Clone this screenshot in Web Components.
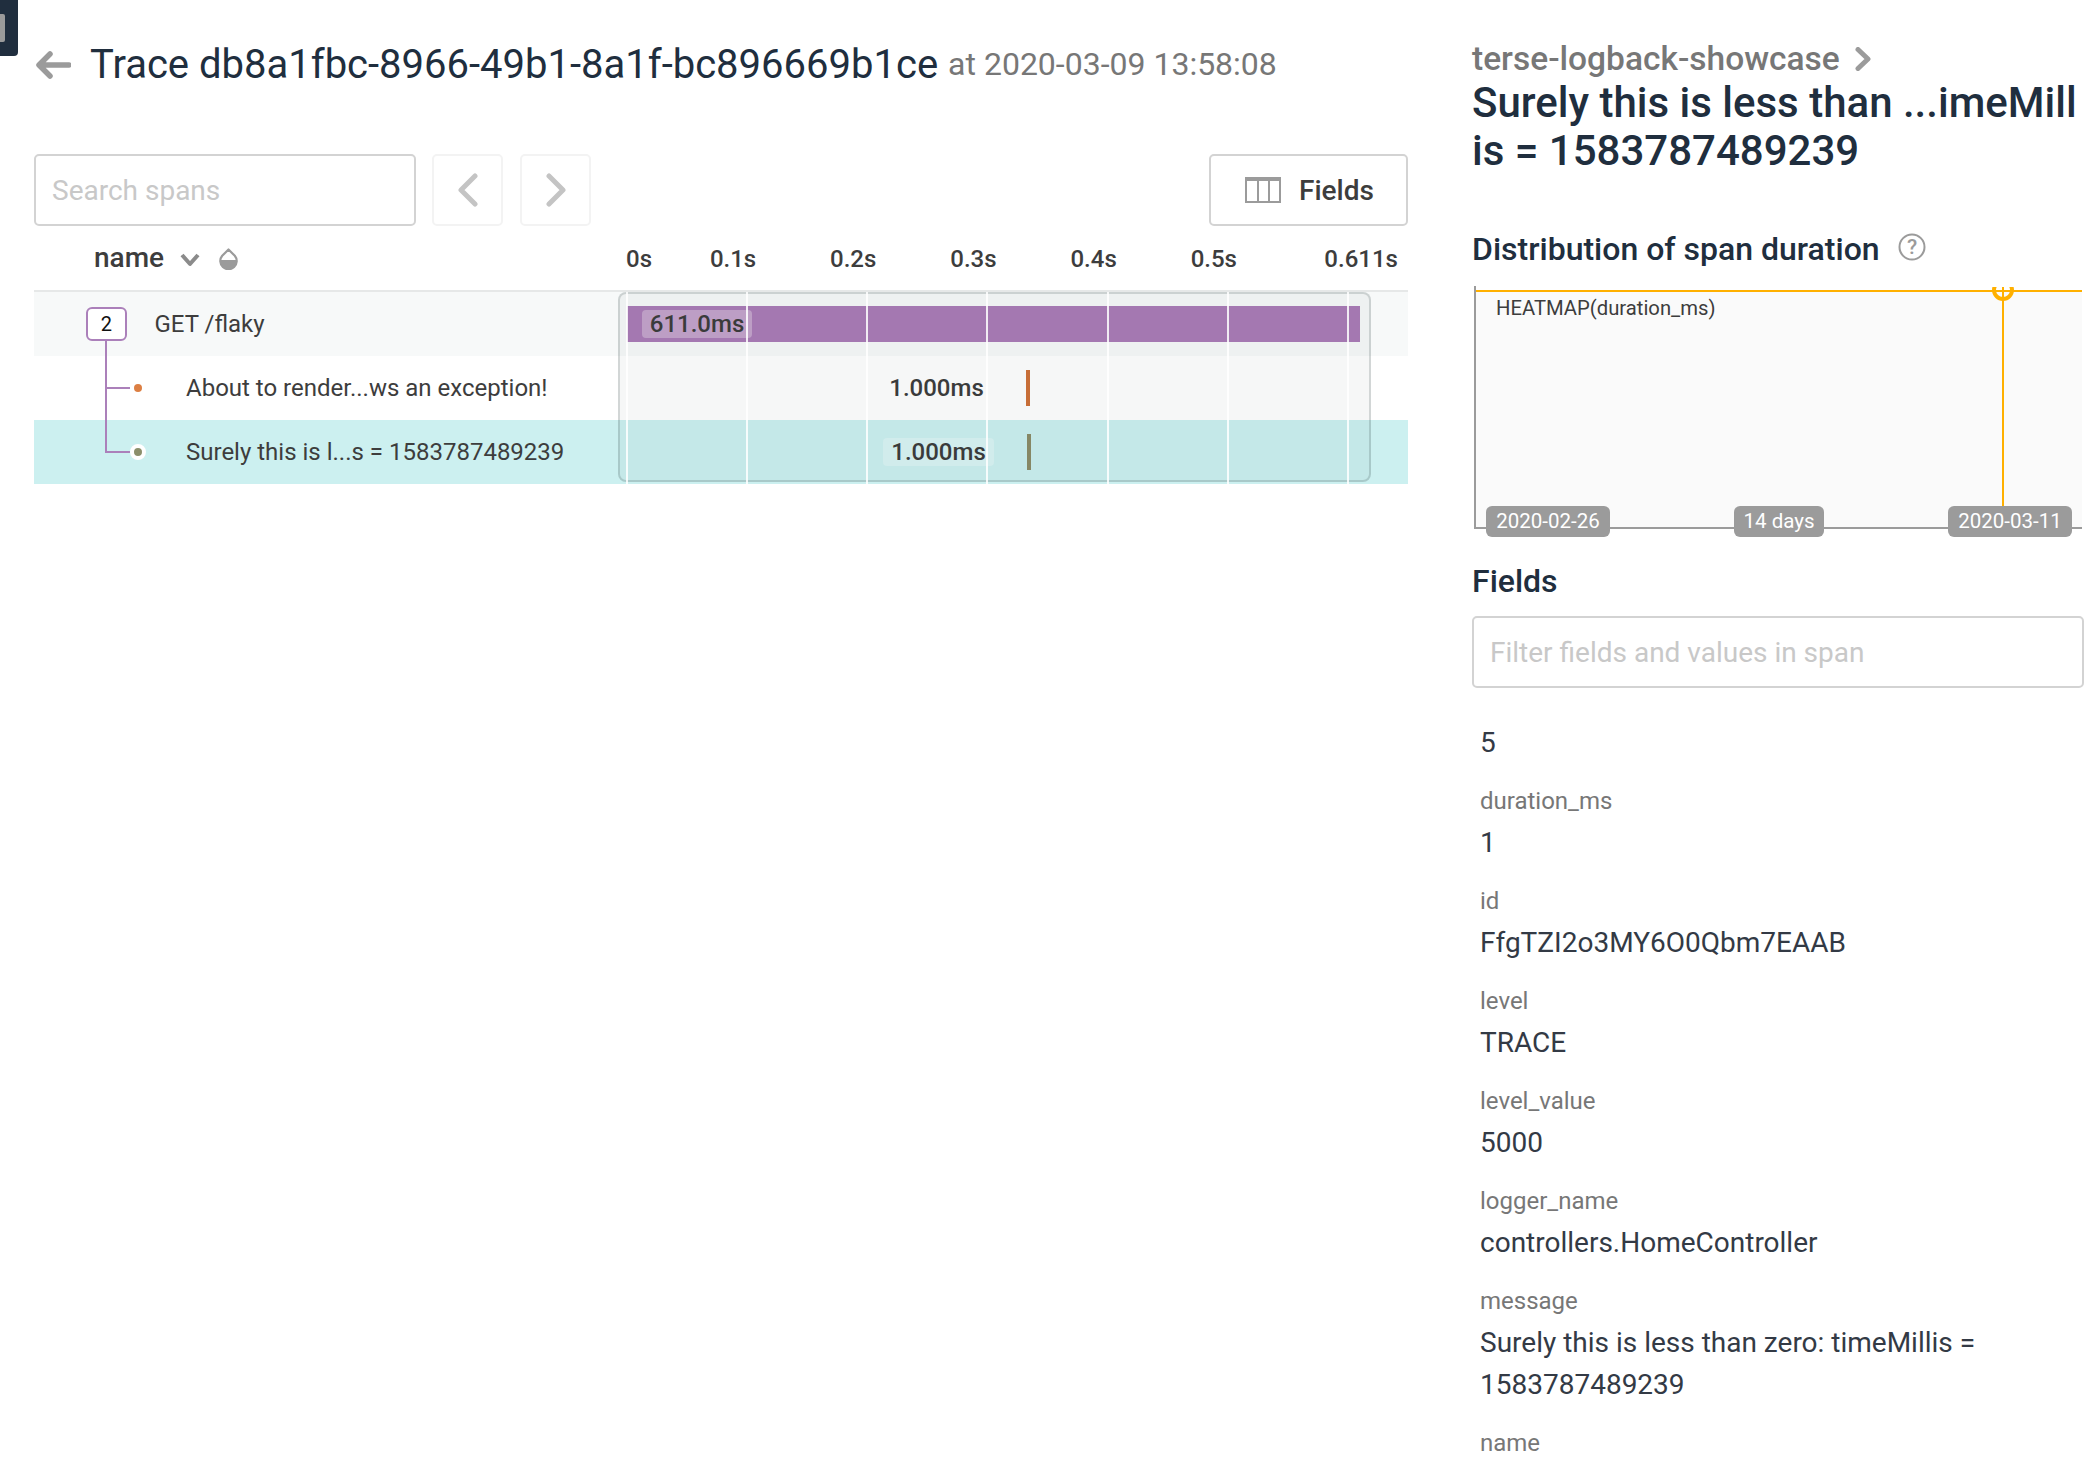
<!DOCTYPE html>
<html lang="en"><head><meta charset="utf-8"><title>Trace</title>
<style>
html,body{margin:0;padding:0;height:1466px;overflow:hidden;background:#fff;font-family:Roboto,"Liberation Sans",sans-serif;color:#3d3d3d}
</style></head><body>
<trace-app>
  <trace-header slot="header" trace="Trace db8a1fbc-8966-49b1-8a1f-bc896669b1ce" at="at 2020-03-09 13:58:08"></trace-header>
  <trace-toolbar slot="toolbar"></trace-toolbar>
  <trace-table slot="table">
    <trace-row kind="root" name="GET /flaky" count="2" dur="611.0ms"></trace-row>
    <trace-row kind="child" name="About to render...ws an exception!" dur="1.000ms" color="#dc7f43" bar="#cf7238" mark="407" tag="262"></trace-row>
    <trace-row kind="last" selected name="Surely this is l...s = 1583787489239" dur="1.000ms" color="#8b8f6b" bar="#8b8b68" mark="408" tag="264"></trace-row>
  </trace-table>
  <span-panel slot="side">
    <field-item value="5"></field-item>
    <field-item label="duration_ms" value="1"></field-item>
    <field-item label="id" value="FfgTZI2o3MY6O0Qbm7EAAB"></field-item>
    <field-item label="level" value="TRACE"></field-item>
    <field-item label="level_value" value="5000"></field-item>
    <field-item label="logger_name" value="controllers.HomeController"></field-item>
    <field-item label="message" value="Surely this is less than zero: timeMillis = 1583787489239"></field-item>
    <field-item label="name"></field-item>
  </span-panel>
</trace-app>
<script>
function def(name, html){
  customElements.define(name, class extends HTMLElement{
    connectedCallback(){
      if(this.shadowRoot) return;
      const a=n=>this.getAttribute(n)||'';
      this.attachShadow({mode:'open'}).innerHTML = html(a,this);
    }
  });
}
def('trace-app',()=>`<style>
:host{display:block;position:relative;width:2100px;height:1466px;overflow:hidden}
.tab{position:absolute;left:0;top:0;width:18px;height:56px;background:#202e3e;border-radius:0 0 4px 0}
.tab i{position:absolute;left:0;top:14px;width:5px;height:28px;background:#9b9b9b;border-radius:0 2px 2px 0}
.wrap{display:grid;grid-template-columns:1374px 612px;column-gap:64px;padding-left:34px}
</style><div class="tab"><i></i></div>
<div class="wrap"><div><slot name="header"></slot><slot name="toolbar"></slot><slot name="table"></slot></div><div><slot name="side"></slot></div></div>`);

def('trace-header',a=>`<style>
:host{display:flex;align-items:center;height:48px;padding-top:41px;padding-bottom:65px;white-space:nowrap}
svg{width:36px;height:28px;margin:0 19px 0 1px;flex:none}
h1{margin:0;font:400 40px/48px Roboto,sans-serif;color:#202e3e}
span{font:400 32px/48px Roboto,sans-serif;color:#777;margin-left:10px;position:relative;top:-1px}
</style><svg viewBox="0 0 36 28"><path d="M15 3 4 14l11 11M5 14h29" fill="none" stroke="#9b9b9b" stroke-width="5.500" stroke-linecap="round" stroke-linejoin="round"/></svg>
<h1>${a('trace')}</h1><span>${a('at')}</span>`);

def('trace-toolbar',()=>`<style>
:host{display:flex;height:72px;gap:16px}
.box{box-sizing:border-box;height:72px;border:2px solid #d3d3d3;border-radius:5px;background:#fff;display:flex;align-items:center}
.search{width:382px;padding-left:16px;font:400 28px Roboto,sans-serif;color:#c8c8c8}
.nav{width:71px;justify-content:center;border-color:#f3f3f3}
.nav.next{margin-left:1px}
.fields{margin-left:auto;width:199px;font:500 28px Roboto,sans-serif;color:#3d3d3d;padding-left:34px;gap:18px}
svg{display:block}
</style><div class="box search">Search spans</div>
<div class="box nav"><svg width="22" height="34" viewBox="0 0 22 34"><path d="M18 3 4 17l14 14" fill="none" stroke="#c4c4c4" stroke-width="5" stroke-linecap="round" stroke-linejoin="round"/></svg></div>
<div class="box nav next"><svg width="22" height="34" viewBox="0 0 22 34"><path d="M4 3l14 14L4 31" fill="none" stroke="#c4c4c4" stroke-width="5" stroke-linecap="round" stroke-linejoin="round"/></svg></div>
<div class="box fields"><svg width="36" height="26" viewBox="0 0 36 26"><path d="M0 0h36v26H0z" fill="#9b9b9b"/><path d="M2 4h10v20H2zM14 4h9v20h-9zM25 4h9v20h-9z" fill="#fff"/></svg>Fields</div>`);

def('trace-table',()=>`<style>
:host{display:block;position:relative;width:1374px}
.head{display:grid;grid-template-columns:592px auto;height:66px;box-sizing:border-box;border-bottom:2px solid #e6e8e8;align-items:center;font:500 24px Roboto,sans-serif;color:#3d3d3d}
.name{display:flex;align-items:center;padding-left:60px;font-size:28px;position:relative;top:-1px}
.name svg{display:block}
.ticks{display:grid;grid-template-columns:10px repeat(5,120.2px) 161px;text-align:right;white-space:nowrap;position:relative;top:1px}
.ticks span:first-child{text-align:left}
.over{position:absolute;left:584px;top:66px;width:753px;height:190px;box-sizing:border-box;border:2px solid rgba(0,30,30,.15);border-radius:8px;background:rgba(0,40,40,.035);pointer-events:none}
.line{position:absolute;top:66px;height:192px;width:2px;background:rgba(255,255,255,.85);pointer-events:none}
</style>
<div class="head"><div class="name">name<svg style="margin:5px 0 0 16px" width="20" height="14" viewBox="0 0 20 14"><path d="M2 2l8 9 8-9" fill="none" stroke="#8b8b8b" stroke-width="4" stroke-linejoin="round"/></svg><svg style="margin:4px 0 0 19px" width="19" height="22" viewBox="0 0 19 22"><path d="M9.500 1.500 3.200 7.800a8.200 8.200 0 1 0 12.600 0z" fill="#fff" stroke="#9b9b9b" stroke-width="2.200" stroke-linejoin="round"/><path d="M1 12h17v1a8.500 8.500 0 0 1-17 0z" fill="#9b9b9b"/></svg></div>
<div class="ticks"><span>0s</span><span>0.1s</span><span>0.2s</span><span>0.3s</span><span>0.4s</span><span>0.5s</span><span>0.611s</span></div></div>
<slot></slot>
<div class="over"></div>
${[592,712,832,952,1072.7,1193,1313].map(x=>`<div class="line" style="left:${x}px"></div>`).join('')}`);

def('trace-row',(a,el)=>{
  const kind=a('kind'), sel=el.hasAttribute('selected');
  const tree = kind==='root'
   ? `<span class="badge">${a('count')}</span>`
   : `<i class="stem"></i><i class="branch"></i><i class="dot ${sel?'sel':''}" style="--c:${a('color')}"></i>`;
  const tl = kind==='root'
   ? `<div class="bar"><span class="tag root">${a('dur')}</span></div>`
   : `<span class="tag" style="left:${a('tag')}px">${a('dur')}</span><i class="mark" style="left:${a('mark')}px;background:${a('bar')}"></i>`;
  return `<style>
:host{display:grid;grid-template-columns:585px 789px;height:64px;background:${kind==='root'?'#f7f9f9':sel?'#ccf0f0':'#fff'}}
.label{position:relative;height:64px;font:400 24px/65px Roboto,sans-serif;color:#3d3d3d;white-space:nowrap;padding-left:${kind==='root'?'120.5px':'152px'}}
.badge{position:absolute;left:51.8px;top:15px;box-sizing:border-box;width:41px;height:34px;border:2px solid #ab80ba;border-radius:6px;background:#fff;color:#111;font:400 20px/30px Roboto,sans-serif;text-align:center}
.stem{position:absolute;left:71px;top:${kind==='child'?'-15px':'-64px'};width:2px;height:${kind==='child'?'47px':'97px'};background:#ab80ba}
.branch{position:absolute;left:71px;top:31px;width:25px;height:2px;background:#ab80ba}
.dot{position:absolute;left:100px;top:28px;width:8px;height:8px;border-radius:50%;background:var(--c)}
.dot.sel{left:96px;top:24px;width:8px;height:8px;border:4px solid #fff;box-sizing:content-box}
.time{position:relative}
.bar{position:absolute;left:8px;top:14px;width:733px;height:36px;background:#ab7cb7}
.tag{position:absolute;top:18px;box-sizing:border-box;width:111px;height:28px;border-radius:4px;background:rgba(255,255,255,.25);font:500 24px/28px Roboto,sans-serif;color:#3d3d3d;text-align:center;white-space:nowrap}
.tag.root{left:15px;top:4px;width:110px;background:rgba(255,255,255,.3)}
.mark{position:absolute;top:14px;width:4px;height:36px}
</style><div class="label">${tree}${a('name')}</div><div class="time">${tl}</div>`;
});

def('span-panel',()=>`<style>
:host{display:block;width:612px}
.crumb{display:flex;align-items:center;gap:14px;height:41px;margin-top:38px;font:500 33.500px/41px Roboto,sans-serif;color:#777;white-space:nowrap}
h1{margin:0;font:500 42px/48px Roboto,sans-serif;color:#202e3e;word-break:break-all}
h2{margin:0;font:500 32px/40px Roboto,sans-serif;color:#202e3e}
.dist{display:flex;align-items:center;gap:18px;margin-top:54px}
.dist svg{position:relative;top:-2px}
.heat{margin-top:17px}
.fieldsT{margin-top:22px}
.filter{box-sizing:border-box;width:612px;height:72px;margin-top:15px;border:2px solid #d3d3d3;border-radius:5px;padding-left:16px;display:flex;align-items:center;font:400 28px Roboto,sans-serif;color:#c8c8c8}
.list{margin-top:34px;padding-left:8px}
</style>
<div class="crumb">terse-logback-showcase<svg width="18" height="24" viewBox="0 0 18 24"><path d="M4 2.500 14 12 4 21.500" fill="none" stroke="#9b9b9b" stroke-width="5" stroke-linecap="round" stroke-linejoin="round"/></svg></div>
<h1>Surely this is less than ...imeMillis = 1583787489239</h1>
<div class="dist"><h2>Distribution of span duration</h2><svg width="28" height="28" viewBox="0 0 28 28"><circle cx="14" cy="14" r="12.500" fill="none" stroke="#9b9b9b" stroke-width="2"/><text x="14" y="21" text-anchor="middle" font-family="Roboto" font-size="21" font-weight="500" fill="#9b9b9b">?</text></svg></div>
<heat-map class="heat"></heat-map>
<h2 class="fieldsT">Fields</h2>
<div class="filter">Filter fields and values in span</div>
<div class="list"><slot></slot></div>`);

def('heat-map',()=>`<style>
:host{display:block;position:relative;width:610px;height:253px}
.plot{position:absolute;left:2px;top:0;width:608px;height:243px;box-sizing:border-box;border-left:2px solid #9b9b9b;border-bottom:2px solid #9b9b9b}
.bg{position:absolute;left:0;right:0;top:4px;bottom:0;background:#fafafa;border-top:2px solid #ffb000;box-sizing:border-box}
.title{position:absolute;left:20px;top:10px;font:400 20.250px/24px Roboto,sans-serif;color:#3d3d3d;white-space:nowrap}
.v{position:absolute;left:526px;top:1px;width:2px;height:219px;background:#ffb000}
.pin{position:absolute;left:516px;top:1px;width:22px;height:14px;overflow:hidden}
.pin i{display:block;box-sizing:border-box;width:22px;height:22px;margin-top:-8px;border:4px solid #ffb000;border-radius:50%}
.lab{position:absolute;top:220px;height:31px;border-radius:6px;background:#9b9b9b;color:#fff;font:400 20.500px/31px Roboto,sans-serif;text-align:center;white-space:nowrap}
</style><div class="plot"><div class="bg"></div><div class="title">HEATMAP(duration_ms)</div><div class="v"></div><div class="pin"><i></i></div></div>
<div class="lab" style="left:14px;width:124px">2020-02-26</div><div class="lab" style="left:262px;width:90px">14 days</div><div class="lab" style="left:476px;width:124px">2020-03-11</div>`);

def('field-item',(a)=>`<style>
:host{display:block;margin-bottom:16px;font:400 28px/42px Roboto,sans-serif;color:#333a45}
.l{font-size:24px;color:#777}
</style>${a('label')?`<div class="l">${a('label')}</div>`:''}${a('value')?`<div>${a('value')}</div>`:''}`);
</script>
</body></html>
